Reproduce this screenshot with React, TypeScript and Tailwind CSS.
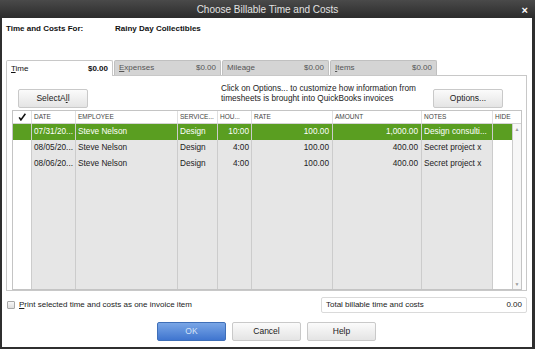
import React from 'react';

type Row = {
  date: string;
  emp: string;
  svc: string;
  hrs: string;
  rate: string;
  amt: string;
  notes: string;
};

const rows: Row[] = [
  { date: '07/31/20...', emp: 'Steve Nelson', svc: 'Design', hrs: '10:00', rate: '100.00', amt: '1,000.00', notes: 'Design consulti...' },
  { date: '08/05/20...', emp: 'Steve Nelson', svc: 'Design', hrs: '4:00', rate: '100.00', amt: '400.00', notes: 'Secret project x' },
  { date: '08/06/20...', emp: 'Steve Nelson', svc: 'Design', hrs: '4:00', rate: '100.00', amt: '400.00', notes: 'Secret project x' },
];

type Col = {
  key: keyof Row | 'check' | 'hide';
  label: string;
  width: string;
  body: string;
  align: string;
};

const cols: Col[] = [
  { key: 'check', label: '', width: 'w-[19px]', body: 'bg-white', align: '' },
  { key: 'date', label: 'DATE', width: 'w-[44px]', body: 'bg-[#e6e6e6]', align: 'text-left pl-[2px]' },
  { key: 'emp', label: 'EMPLOYEE', width: 'w-[102px]', body: 'bg-[#e6e6e6]', align: 'text-left pl-[2px]' },
  { key: 'svc', label: 'SERVICE...', width: 'w-[40px]', body: 'bg-[#e6e6e6]', align: 'text-left pl-[2px]' },
  { key: 'hrs', label: 'HOU...', width: 'w-[34px]', body: 'bg-[#e6e6e6]', align: 'text-right pr-[2px]' },
  { key: 'rate', label: 'RATE', width: 'w-[81px]', body: 'bg-[#e6e6e6]', align: 'text-right pr-[3px]' },
  { key: 'amt', label: 'AMOUNT', width: 'w-[89px]', body: 'bg-[#e6e6e6]', align: 'text-right pr-[3px]' },
  { key: 'notes', label: 'NOTES', width: 'w-[71px]', body: 'bg-[#e6e6e6]', align: 'text-left pl-[2px]' },
  { key: 'hide', label: 'HIDE', width: 'w-[20px]', body: 'bg-white', align: '' },
];

const CheckMark = () => (
  <svg width="8" height="8" viewBox="0 0 8 8">
    <path d="M1.2 4.4 L2.9 6.9 L7.4 0.8" fill="none" stroke="#111" strokeWidth="1.6" />
  </svg>
);

const Tab = ({ hot, rest, active }: { hot: string; rest: string; active?: boolean }) => (
  <div
    className={
      active
        ? 'relative z-10 -mb-px flex h-[16px] w-[107px] items-center justify-between rounded-t-[2px] border border-b-0 border-[#c8c8c8] bg-white px-[4px] text-[8px] text-[#111]'
        : 'flex h-[15px] w-[107px] items-center justify-between rounded-t-[2px] border border-b-0 border-[#c0c0c0] bg-[#d4d4d4] px-[4px] text-[8px] text-[#555]'
    }
  >
    <span>
      {hot && <u>{hot}</u>}
      {rest}
    </span>
    <span className={active ? 'font-bold' : ''}>$0.00</span>
  </div>
);

const GrayButton = ({ children, w }: { children: React.ReactNode; w: string }) => (
  <button
    className={`${w} h-[19px] rounded-[2px] border border-[#c9c9c9] bg-gradient-to-b from-[#fbfbfb] to-[#e4e4e4] text-[8.5px] text-[#222]`}
  >
    {children}
  </button>
);

export default function App() {
  return (
    <div className="flex h-[349px] w-[535px] flex-col bg-[#2f2f2f] font-['Liberation_Sans',Arial,sans-serif]">
      {/* title bar */}
      <div className="relative flex h-[18px] items-center justify-center bg-gradient-to-b from-[#4a4a4a] to-[#2c2c2c]">
        <span className="text-[10px] text-[#e2e2e2]">Choose Billable Time and Costs</span>
        <span className="absolute right-[7px] top-[2px] text-[11px] font-bold text-white">×</span>
      </div>

      <div className="mb-[2px] ml-[2px] mr-[3px] flex flex-1 flex-col bg-white pl-[4px] pr-[5px]">
        <div className="mt-[6px] flex h-[10px] items-center text-[8px] font-bold text-[#111]">
          <span className="w-[109px]">Time and Costs For:</span>
          <span>Rainy Day Collectibles</span>
        </div>

        {/* tabs */}
        <div className="mt-[26px] flex items-end gap-[1px]">
          <Tab hot="T" rest="ime" active />
          <Tab hot="E" rest="xpenses" />
          <Tab hot="" rest="Mileage" />
          <Tab hot="I" rest="tems" />
        </div>

        {/* panel */}
        <div className="flex h-[216px] flex-col border border-[#c8c8c8] pl-[5px] pr-[4px] pt-[8px]">
          <div className="flex h-[19px] items-start">
            <div className="ml-[6px]">
              <GrayButton w="w-[70px]">
                SelectA<u>l</u>l
              </GrayButton>
            </div>
            <div className="ml-[133px] text-[8.25px] leading-[9.5px] text-[#222]">
              <div>Click on Options... to customize how information from</div>
              <div>timesheets is brought into QuickBooks invoices</div>
            </div>
            <div className="ml-auto mr-[19px]">
              <GrayButton w="w-[70px]">Options...</GrayButton>
            </div>
          </div>

          {/* table */}
          <div className="mt-[7px] flex h-[180px] flex-col border border-[#c4c4c4]">
            <div className="flex h-[13px] border-b border-[#d4d4d4] bg-white text-[6.5px] text-[#444]">
              {cols.map((c) => (
                <div
                  key={c.key}
                  className={`${c.key === 'hide' ? 'w-[28px]' : c.width} flex items-center ${
                    c.key === 'check' ? 'justify-center' : 'pl-[2px]'
                  } ${c.key === 'hide' ? '' : 'border-r border-[#e0e0e0]'}`}
                >
                  {c.key === 'check' ? <CheckMark /> : c.label}
                </div>
              ))}
            </div>
            <div className="flex flex-1">
              {cols.map((c) => (
                <div key={c.key} className={`${c.width} flex flex-col border-r border-[#cccccc] ${c.body}`}>
                  {rows.map((r, i) => (
                    <div
                      key={i}
                      className={`h-[16px] overflow-hidden whitespace-nowrap text-[8.25px] leading-[16px] ${c.align} ${
                        i === 0 ? 'bg-[#5a9e21] text-white' : 'text-[#222]'
                      }`}
                    >
                      {c.key === 'check' || c.key === 'hide' ? '' : r[c.key as keyof Row]}
                    </div>
                  ))}
                  <div className="flex-1" />
                </div>
              ))}
              <div className="flex w-[8px] flex-col items-center justify-between bg-[#f7f7f7] py-[2px] text-[5px] leading-[6px] text-[#9a9a9a]">
                <span>▲</span>
                <span>▼</span>
              </div>
            </div>
          </div>
        </div>

        {/* totals */}
        <div className="mt-[6px] flex h-[16px] items-center">
          <div className="ml-[1px] h-[8px] w-[8px] rounded-[1px] border border-[#a8a8a8] bg-gradient-to-b from-[#f8f8f8] to-[#dedede]" />
          <span className="ml-[4px] text-[8px] text-[#222]">
            <u>P</u>rint selected time and costs as one invoice item
          </span>
          <div className="ml-auto flex h-[16px] w-[206px] items-center justify-between rounded-[2px] border border-[#dadada] px-[4px] text-[8px] text-[#222]">
            <span>Total billable time and costs</span>
            <span>0.00</span>
          </div>
        </div>

        {/* buttons */}
        <div className="mt-[9px] flex justify-center gap-[6px]">
          <button className="h-[19px] w-[69px] rounded-[2px] border border-[#3f6fb8] bg-gradient-to-b from-[#7aa6e6] to-[#3f75cf] text-[8.5px] text-[#d6e4f7]">
            OK
          </button>
          <GrayButton w="w-[69px]">Cancel</GrayButton>
          <GrayButton w="w-[69px]">Help</GrayButton>
        </div>
      </div>
    </div>
  );
}
